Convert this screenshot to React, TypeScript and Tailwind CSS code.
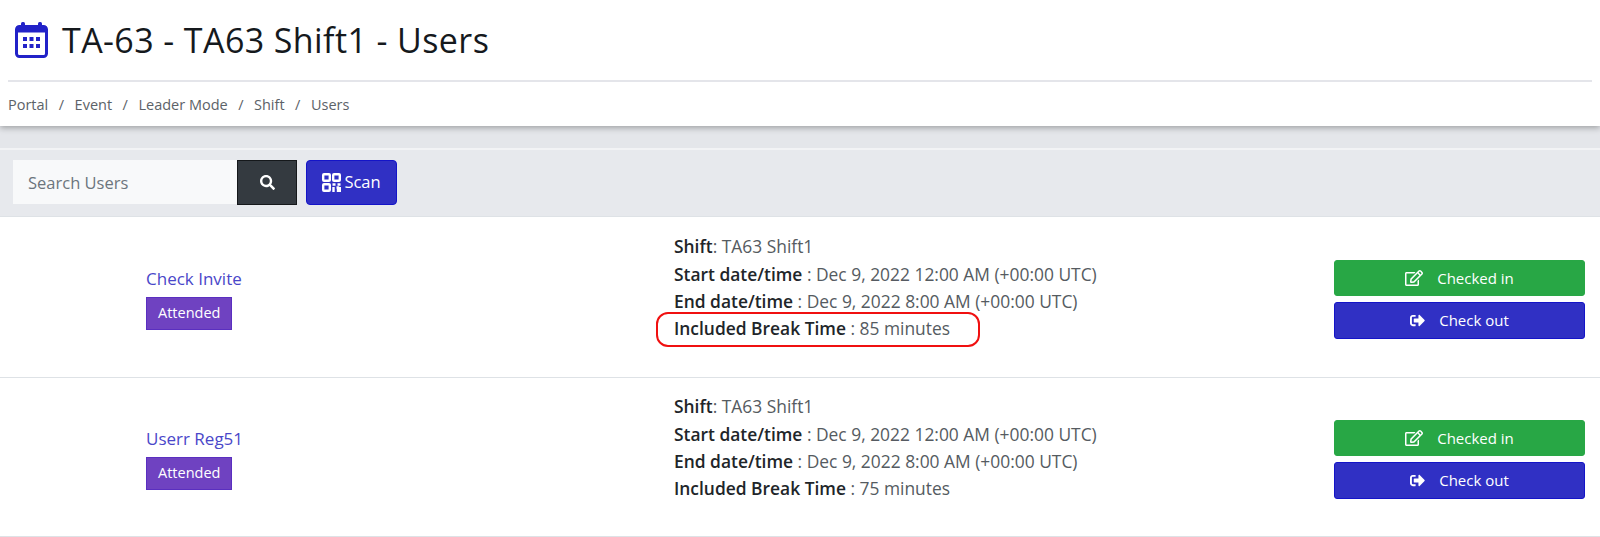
import React from 'react';
import { FaSearch, FaRegEdit, FaSignOutAlt } from 'react-icons/fa';

const crumbs = ['Portal', 'Event', 'Leader Mode', 'Shift', 'Users'];

const users = [
  { name: 'Check Invite', minutes: 85, marked: true, h: 'h-[161px]' },
  { name: 'Userr Reg51', minutes: 75, marked: false, h: 'h-[159px]' },
];

const CalendarIcon = () => (
  <svg width="33" height="36" viewBox="0 0 33 36" className="shrink-0">
    <rect x="6" y="0" width="4" height="7" rx="1.5" fill="#2222c8" />
    <rect x="23" y="0" width="4" height="7" rx="1.5" fill="#2222c8" />
    <rect x="1.5" y="4.5" width="30" height="30" rx="3" fill="#fff" stroke="#2222c8" strokeWidth="3" />
    <rect x="1.5" y="4.5" width="30" height="6" fill="#2222c8" />
    {[8, 14.5, 21].map((x) =>
      [15, 22].map((y) => <rect key={`${x}-${y}`} x={x} y={y} width="4" height="4" fill="#2222c8" />)
    )}
  </svg>
);

const ScanIcon = () => (
  <svg width="19" height="19" viewBox="0 0 19 19" className="shrink-0" fill="none" stroke="#fff" strokeWidth="2.4">
    <rect x="1.2" y="1.2" width="6.6" height="6.6" rx="0.8" />
    <rect x="11.2" y="1.2" width="6.6" height="6.6" rx="0.8" />
    <rect x="1.2" y="11.2" width="6.6" height="6.6" rx="0.8" />
    <path d="M10.5 11.5h3M15.5 11.5h3M11.5 14v5M14.5 14.5h1.5v4.5M18 14v5" />
  </svg>
);

const UserRow = ({ name, minutes, marked, h }: { name: string; minutes: number; marked: boolean; h: string }) => (
  <div className={`flex items-center bg-white border-b border-[#dee2e6] ${h}`}>
    <div className="w-[674px] pl-[146px] pt-[2px]">
      <a className="block text-[17px] leading-[24px] text-[#4a47c9]">{name}</a>
      <span className="mt-[6px] inline-block bg-[#6f42c1] border border-[#5a2fc0] px-[11px] py-[3.5px] text-[14.5px] leading-[24px] font-medium text-white">
        Attended
      </span>
    </div>
    <div className="relative mb-[18px] flex-1 text-[17.4px] leading-[27.3px] text-[#555b61]">
      <div><b className="font-semibold text-[#212529]">Shift</b>: TA63 Shift1</div>
      <div><b className="font-semibold text-[#212529]">Start date/time</b> : Dec 9, 2022 12:00 AM (+00:00 UTC)</div>
      <div><b className="font-semibold text-[#212529]">End date/time</b> : Dec 9, 2022 8:00 AM (+00:00 UTC)</div>
      <div><b className="font-semibold text-[#212529]">Included Break Time</b> : {minutes} minutes</div>
      {marked && (
        <div className="absolute left-[-18px] top-[79px] h-[35px] w-[324px] rounded-[12px] border-2 border-[#f01010]" />
      )}
    </div>
    <div className="mr-[15px] mt-[5px] flex w-[251px] flex-col gap-[6px]">
      <button className="flex h-[36px] items-center justify-center gap-[14px] rounded-[3px] border border-[#28a745] bg-[#28a745] text-[15px] text-white">
        <FaRegEdit className="text-[18px]" /> Checked in
      </button>
      <button className="flex h-[37px] items-center justify-center gap-[14px] rounded-[3px] border border-[#1414c8] bg-[#3030c4] text-[15px] text-white">
        <FaSignOutAlt className="text-[15px]" /> Check out
      </button>
    </div>
  </div>
);

export default function App() {
  return (
    <div className="h-[537px] overflow-hidden bg-white font-['Open_Sans','Noto_Sans',sans-serif]">
      <header className="relative z-10 h-[126px] bg-white px-[8px] shadow-[0_2px_6px_rgba(0,0,0,0.3)]">
        <div className="flex h-[82px] items-center gap-[14px] border-b-2 border-[#e4e5ea] pl-[7px]">
          <CalendarIcon />
          <h1 className="text-[34px] font-normal tracking-[0.4px] text-[#15191d]">TA-63 - TA63 Shift1 - Users</h1>
        </div>
        <nav className="flex h-[44px] items-center pt-[2px] text-[14.5px] text-[#5c6268]">
          {crumbs.map((c, i) => (
            <React.Fragment key={c}>
              {i > 0 && <span className="px-[10.5px]">/</span>}
              <span>{c}</span>
            </React.Fragment>
          ))}
        </nav>
      </header>
      <div className="h-[24px] border-b-2 border-[#f2f3f5] bg-[#e4e6ea]" />
      <div className="flex h-[67px] items-start gap-[9px] border-b border-[#dee2e6] bg-[#e7e9ed] pl-[13px] pt-[10px]">
        <div className="flex">
          <div className="flex h-[44px] w-[224px] items-center bg-[#f8f9fa] pl-[15px] pt-[2px] text-[16.5px] text-[#6c757d]">Search Users</div>
          <button className="flex h-[45px] w-[60px] items-center justify-center border border-[#15181b] bg-[#343a40] text-[15px] text-white">
            <FaSearch />
          </button>
        </div>
        <button className="flex h-[45px] w-[91px] items-center justify-center gap-[3px] rounded-[4px] border border-[#1414c8] bg-[#3030c4] text-[16.5px] font-medium text-white">
          <ScanIcon /> Scan
        </button>
      </div>
      {users.map((u) => (
        <UserRow key={u.name} {...u} />
      ))}
    </div>
  );
}
